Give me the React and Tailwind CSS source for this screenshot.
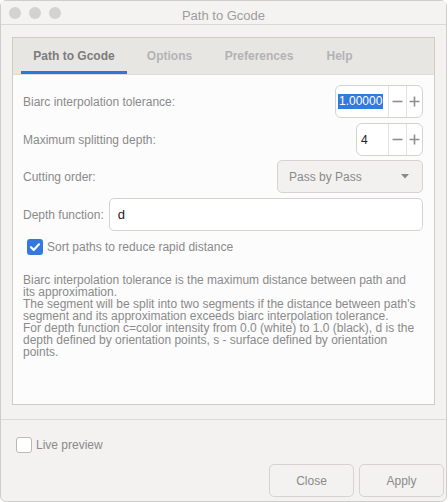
import React from 'react';

const FONT = { fontFamily: '"Liberation Sans", Arial, sans-serif' };

function SpinBox({ value, width, selected }) {
  return (
    <div className={`flex h-[33px] ${width} rounded-[6px] border border-[#d6d3cf] bg-white`}>
      <div className="flex flex-1 items-center pl-[2px] text-[12px] text-[#222]">
        {selected ? (
          <span className="bg-[#3479e0] px-[1px] leading-[15px] text-white">{value}</span>
        ) : (
          <span className="pl-[2px]">{value}</span>
        )}
      </div>
      <div className="flex w-[18px] items-center justify-center border-l border-[#e4e2df]">
        <svg width="11" height="11" viewBox="0 0 11 11">
          <path d="M0.5 5.5h10" stroke="#8e8e8e" strokeWidth="1.6" />
        </svg>
      </div>
      <div className="flex w-[16px] items-center justify-center border-l border-[#e4e2df]">
        <svg width="11" height="11" viewBox="0 0 11 11">
          <path d="M0.5 5.5h10M5.5 0.5v10" stroke="#8e8e8e" strokeWidth="1.6" />
        </svg>
      </div>
    </div>
  );
}

export default function App() {
  const tabs = [
    { label: 'Path to Gcode', w: 'w-[106px] ml-[8px]', active: true },
    { label: 'Options', w: 'w-[85px]' },
    { label: 'Preferences', w: 'w-[94px]' },
    { label: 'Help', w: 'w-[67px]' },
  ];

  const help = [
    'Biarc interpolation tolerance is the maximum distance between path and',
    'its approximation.',
    "The segment will be split into two segments if the distance between path's",
    'segment and its approximation exceeds biarc interpolation tolerance.',
    'For depth function c=color intensity from 0.0 (white) to 1.0 (black), d is the',
    'depth defined by orientation points, s - surface defined by orientation',
    'points.',
  ];

  return (
    <div style={FONT} className="h-[502px] w-[448px] bg-white">
      <div className="flex h-[502px] w-[447px] flex-col rounded-[6px] border border-[#cfcdcb] bg-[#f3f2f1]">
        {/* title bar */}
        <div className="relative flex h-[24px] items-center border-b border-[#dad8d6] bg-[#f4f3f2]">
          <div className="flex gap-[8px] pl-[8px]">
            <span className="h-[12px] w-[12px] rounded-full bg-[#d3d2d1]" />
            <span className="h-[12px] w-[12px] rounded-full bg-[#d3d2d1]" />
            <span className="h-[12px] w-[12px] rounded-full bg-[#d3d2d1]" />
          </div>
          <div className="absolute inset-x-0 top-[5px] text-center text-[13px] text-[#9d9d9d]">Path to Gcode</div>
        </div>

        {/* notebook */}
        <div className="ml-[11px] mt-[12px] flex h-[368px] w-[423px] flex-col border border-[#cfccc8]">
          <div className="flex h-[37px] border-b border-[#dedcd9] bg-[#e7e6e3]">
            {tabs.map((t) => (
              <div
                key={t.label}
                className={`${t.w} flex items-center justify-center border-b-[3px] pt-[3px] text-[12px] font-bold ${
                  t.active ? 'border-[#2f74d9] text-[#7c7c7c]' : 'border-transparent text-[#b3b3b3]'
                }`}
              >
                {t.label}
              </div>
            ))}
          </div>

          <div className="flex flex-1 flex-col bg-[#fcfcfc] pl-[10px] pr-[11px] pt-[10px] text-[12px] text-[#8a8a8a]">
            <div className="flex items-center justify-between">
              <span>Biarc interpolation tolerance:</span>
              <SpinBox value="1.00000" width="w-[88px]" selected />
            </div>
            <div className="mt-[5px] flex items-center justify-between">
              <span>Maximum splitting depth:</span>
              <SpinBox value="4" width="w-[67px]" />
            </div>
            <div className="mt-[4px] flex items-center justify-between">
              <span>Cutting order:</span>
              <div className="flex h-[33px] w-[146px] items-center justify-between rounded-[5px] border border-[#d6d3cf] bg-[#f2f1ef] pl-[11px] pr-[13px]">
                <span>Pass by Pass</span>
                <svg width="8" height="5" viewBox="0 0 8 5">
                  <path d="M0 0h8L4 4.5z" fill="#8a8a8a" />
                </svg>
              </div>
            </div>
            <div className="mt-[5px] flex items-center gap-[5px]">
              <span>Depth function:</span>
              <div className="flex h-[33px] flex-1 items-center rounded-[5px] border border-[#d6d3cf] bg-white pl-[8px] text-[13px] text-[#222]">
                d
              </div>
            </div>
            <div className="mt-[7px] flex items-center gap-[4px] pl-[4px]">
              <span className="flex h-[16px] w-[16px] items-center justify-center rounded-[3px] bg-[#3479e0]">
                <svg width="12" height="12" viewBox="0 0 12 12">
                  <path d="M2 6.2l2.7 2.7L10 3.3" fill="none" stroke="white" strokeWidth="2.2" strokeLinecap="round" strokeLinejoin="round" />
                </svg>
              </span>
              <span>Sort paths to reduce rapid distance</span>
            </div>
            <div className="mt-[18px] text-[12px] leading-[12px] text-[#8a8a8a]">
              {help.map((l) => (
                <div key={l} className="whitespace-nowrap">{l}</div>
              ))}
            </div>
          </div>
        </div>

        <div className="mt-[14px] h-px bg-[#dcdad7]" />

        <div className="mt-[16px] flex items-center gap-[4px] pl-[15px] text-[12px] text-[#8a8a8a]">
          <span className="h-[16px] w-[16px] rounded-[3px] border border-[#bdb9b5] bg-white" />
          <span>Live preview</span>
        </div>

        <div className="mt-[10px] flex justify-end gap-[5px] pr-[2px] text-[12px] text-[#8a8a8a]">
          <div className="flex h-[33px] w-[85px] items-center justify-center rounded-[5px] border border-[#d6d3cf] bg-[#f3f2f1]">Close</div>
          <div className="flex h-[33px] w-[85px] items-center justify-center rounded-[5px] border border-[#d6d3cf] bg-[#f3f2f1]">Apply</div>
        </div>
      </div>
    </div>
  );
}
